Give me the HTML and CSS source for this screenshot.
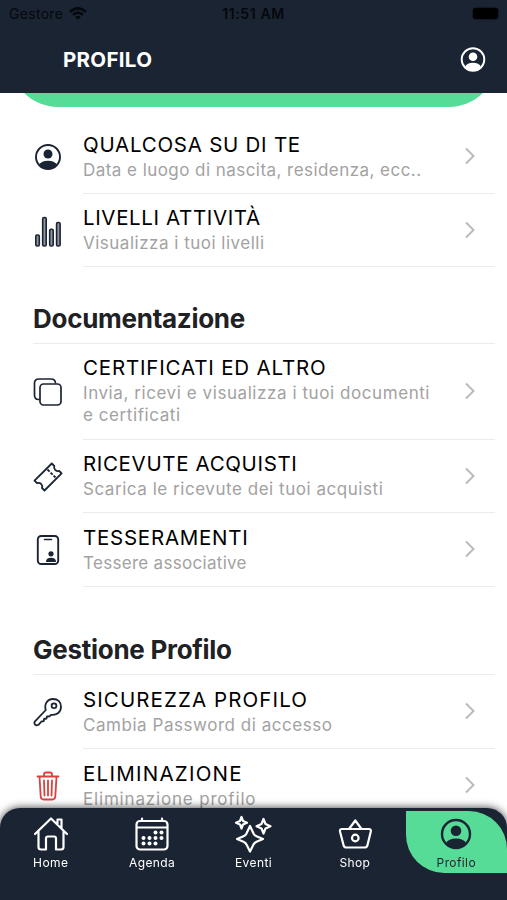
FILE: index.html
```html
<!DOCTYPE html>
<html lang="it">
<head>
    <meta charset="UTF-8">
    <meta name="viewport" content="width=device-width, initial-scale=1.0">
    <title>Profilo</title>
    <link rel="stylesheet" href="styles.css">
</head>
<body>
    <div class="header">
        <div class="statusbar">
            <div class="carrier">
                <span>Gestore</span>
                <svg width="18" height="13" viewBox="0 0 18 13">
                    <path d="M1 4.8Q9-2.2 17 4.8M4 7.8Q9 3.5 14 7.8" fill="none" stroke="#05080c" stroke-width="2.6"/>
                    <path d="M6.2 9.8Q9 7.6 11.8 9.8L9 12.8Z" fill="#05080c"/>
                </svg>
            </div>
            <div class="clock">11:51 AM</div>
            <div class="battery"><span></span></div>
        </div>
        <div class="titlebar">
            <h1>PROFILO</h1>
            <svg width="26" height="26" viewBox="0 0 26 26">
                <circle cx="13" cy="12.5" r="11.3" fill="none" stroke="#fff" stroke-width="1.9"/>
                <circle cx="13" cy="9.8" r="4.3" fill="#fff"/>
                <path d="M5 20Q7 15.8 13 15.8T21 20Q18 23.5 13 23.5T5 20Z" fill="#fff"/>
            </svg>
        </div>
    </div>

    <div class="content">
        <div class="banner"></div>

        <div class="list first">
            <div class="row">
                <div class="icon">
                    <svg width="28" height="28" viewBox="0 0 28 28">
                        <circle cx="14" cy="14" r="12" fill="none" stroke="#1b2433" stroke-width="1.9"/>
                        <circle cx="14" cy="11" r="4.5" fill="#1b2433"/>
                        <path d="M5 21.5Q7.5 17.7 14 17.7T23 21.5Q19.5 26 14 26T5 21.5Z" fill="#1b2433"/>
                    </svg>
                </div>
                <div class="text">
                    <h3 class="t-info">QUALCOSA SU DI TE</h3>
                    <p class="s-info">Data e luogo di nascita, residenza, ecc..</p>
                </div>
                <svg class="chevron" width="12" height="18" viewBox="0 0 12 18"><path d="M2 1.5L9.5 9L2 16.5"/></svg>
            </div>
            <div class="row">
                <div class="icon">
                    <svg width="28" height="32" viewBox="0 0 28 32" fill="#8e93a1" stroke="#1b2433" stroke-width="1.6">
                        <rect x="1.8" y="20" width="3.5" height="11" rx="1.3"/>
                        <rect x="8.7" y="2.5" width="3.5" height="28.5" rx="1.3"/>
                        <rect x="15.7" y="14.3" width="3.5" height="16.7" rx="1.3"/>
                        <rect x="22.6" y="7.5" width="3.5" height="23.5" rx="1.3"/>
                    </svg>
                </div>
                <div class="text">
                    <h3 class="t-levels">LIVELLI ATTIVITÀ</h3>
                    <p class="s-levels">Visualizza i tuoi livelli</p>
                </div>
                <svg class="chevron" width="12" height="18" viewBox="0 0 12 18"><path d="M2 1.5L9.5 9L2 16.5"/></svg>
            </div>
        </div>

        <h2 class="docs">Documentazione</h2>
        <div class="list">
            <div class="row">
                <div class="icon">
                    <svg width="30" height="30" viewBox="0 0 30 30" fill="none" stroke="#1b2433" stroke-width="1.7">
                        <path d="M7 22.5H5.5Q1.5 22.5 1.5 18V6Q1.5 2 6 2H18Q22.5 2 22.5 6.5"/>
                        <rect x="7" y="7" width="21" height="21" rx="3.5"/>
                    </svg>
                </div>
                <div class="text">
                    <h3 class="t-certs">CERTIFICATI ED ALTRO</h3>
                    <p class="s-certs">Invia, ricevi e visualizza i tuoi documenti<br>e certificati</p>
                </div>
                <svg class="chevron" width="12" height="18" viewBox="0 0 12 18"><path d="M2 1.5L9.5 9L2 16.5"/></svg>
            </div>
            <div class="row">
                <div class="icon">
                    <svg width="30" height="30" viewBox="0 0 30 30" fill="none" stroke="#1b2433" stroke-width="1.8" stroke-linejoin="round">
                        <path d="M18.8 1.5L21.3 4Q20.5 6.3 22.3 8Q24 9.5 26.2 9L28.6 11.4L11.5 28.5L9 26Q9.8 23.7 8.2 22Q6.3 20.3 4 21.2L1.5 18.7Z"/>
                        <path d="M14.5 7.5L22.5 15.5" stroke-dasharray="3 1.3"/>
                    </svg>
                </div>
                <div class="text">
                    <h3 class="t-receipts">RICEVUTE ACQUISTI</h3>
                    <p class="s-receipts">Scarica le ricevute dei tuoi acquisti</p>
                </div>
                <svg class="chevron" width="12" height="18" viewBox="0 0 12 18"><path d="M2 1.5L9.5 9L2 16.5"/></svg>
            </div>
            <div class="row">
                <div class="icon">
                    <svg width="24" height="32" viewBox="0 0 24 32">
                        <rect x="1.8" y="2" width="20.4" height="28" rx="3.5" fill="none" stroke="#1b2433" stroke-width="1.9"/>
                        <path d="M8.5 5.5H15.5" stroke="#1b2433" stroke-width="1.6" stroke-linecap="round"/>
                        <circle cx="15" cy="19.8" r="2.6" fill="#1b2433"/>
                        <path d="M10 28Q10 23.8 15 23.8T20 28Z" fill="#1b2433"/>
                    </svg>
                </div>
                <div class="text">
                    <h3 class="t-cards">TESSERAMENTI</h3>
                    <p class="s-cards">Tessere associative</p>
                </div>
                <svg class="chevron" width="12" height="18" viewBox="0 0 12 18"><path d="M2 1.5L9.5 9L2 16.5"/></svg>
            </div>
        </div>

        <h2 class="manage">Gestione Profilo</h2>
        <div class="list">
            <div class="row">
                <div class="icon">
                    <svg width="30" height="30" viewBox="0 0 30 30" fill="none" stroke="#1b2433" stroke-width="1.8" stroke-linejoin="round">
                        <path d="M12.8 13C11 7.5 14 2 20 2C25 2 28 5.3 28 9.8C28 15 24 18.5 18 17.8L16.5 19.3L14 19.5L13.5 21.5L11 22L10.8 24.2L8.4 24.5L5.5 27.8Q3.5 29 2 27.5Q.8 26 2 24.3Z"/>
                        <circle cx="21" cy="8.8" r="2.4"/>
                    </svg>
                </div>
                <div class="text">
                    <h3 class="t-security">SICUREZZA PROFILO</h3>
                    <p class="s-security">Cambia Password di accesso</p>
                </div>
                <svg class="chevron" width="12" height="18" viewBox="0 0 12 18"><path d="M2 1.5L9.5 9L2 16.5"/></svg>
            </div>
            <div class="row">
                <div class="icon">
                    <svg width="24" height="30" viewBox="0 0 24 30" fill="none" stroke="#d9413f" stroke-width="1.8" stroke-linecap="round" stroke-linejoin="round">
                        <path d="M1.5 5.5H22.5M3.5 5.5L4.7 25.5Q5 28.5 7.5 28.5H16.5Q19 28.5 19.3 25.5L20.5 5.5M8 5V3.5Q8 1.5 10 1.5H14Q16 1.5 16 3.5V5M8 9.5L8.5 24.5M12 9.5V24.5M16 9.5L15.5 24.5"/>
                    </svg>
                </div>
                <div class="text">
                    <h3 class="t-delete">ELIMINAZIONE</h3>
                    <p class="s-delete">Eliminazione profilo</p>
                </div>
                <svg class="chevron" width="12" height="18" viewBox="0 0 12 18"><path d="M2 1.5L9.5 9L2 16.5"/></svg>
            </div>
        </div>
    </div>

    <div class="tabbar">
        <div class="tab">
            <svg width="36" height="36" viewBox="0 0 36 36" fill="none" stroke="#fff" stroke-width="2.2" stroke-linecap="round" stroke-linejoin="round">
                <path d="M2 18L18 2.5L34 18M5.5 15V31Q5.5 33.5 8 33.5H13V22.5Q13 20.5 15 20.5H21Q23 20.5 23 22.5V33.5H28Q30.5 33.5 30.5 31V15M24.5 8V3.5H28.5V12.5"/>
            </svg>
            <span>Home</span>
        </div>
        <div class="tab">
            <svg width="36" height="36" viewBox="0 0 36 36" fill="none" stroke="#fff" stroke-width="2.2" stroke-linecap="round">
                <rect x="2.5" y="5" width="31" height="28.5" rx="3.5"/>
                <path d="M3 11.5H33M8 5V2.5M28 5V2.5"/>
                <g fill="#fff" stroke="none">
                    <circle cx="21.5" cy="16.5" r="2"/><circle cx="27.5" cy="16.5" r="2"/>
                    <circle cx="9.5" cy="22" r="2"/><circle cx="15.5" cy="22" r="2"/><circle cx="21.5" cy="22" r="2"/><circle cx="27.5" cy="22" r="2"/>
                    <circle cx="9.5" cy="27.5" r="2"/><circle cx="15.5" cy="27.5" r="2"/><circle cx="21.5" cy="27.5" r="2"/>
                </g>
            </svg>
            <span>Agenda</span>
        </div>
        <div class="tab">
            <svg class="stars" width="38" height="40" viewBox="0 0 38 40" fill="none" stroke="#fff" stroke-width="2.2" stroke-linejoin="round">
                <path d="M16 12L19.500 19.500Q20.500 21.500 22.500 22.300L29 25L22.500 27.700Q20.500 28.500 19.500 30.500L16 37.500L12.500 30.500Q11.500 28.500 9.500 27.700L3 25L9.500 22.300Q11.500 21.500 12.500 19.500Z"/>
                <path d="M7.500 3L9 7L13 8.800L9 10.500L7.500 14.500L6 10.500L2 8.800L6 7ZM29.500 5L31.500 10L36.500 12.300L31.500 14.500L29.500 19.500L27.500 14.500L22.500 12.300L27.500 10Z"/>
            </svg>
            <span>Eventi</span>
        </div>
        <div class="tab">
            <svg width="36" height="36" viewBox="0 0 36 36" fill="none" stroke="#fff" stroke-width="2.2" stroke-linejoin="round">
                <path d="M5 13H32Q34.2 13 33.8 15.5L30.5 29Q30 31.5 27.5 31.5H9.5Q7 31.5 6.500 29L3 15.5Q2.500 13 5 13ZM12 13L18.300 4.5L24.500 13"/>
                <circle cx="18.3" cy="22" r="3.3"/>
            </svg>
            <span>Shop</span>
        </div>
        <div class="tab active">
            <svg width="36" height="36" viewBox="0 0 36 36">
                <circle cx="18" cy="18" r="14" fill="none" stroke="#1b2433" stroke-width="2.4"/>
                <circle cx="18" cy="14.8" r="5.3" fill="#1b2433"/>
                <path d="M8 27Q10.5 22.5 18 22.5T28 27Q24 32 18 32T8 27Z" fill="#1b2433"/>
            </svg>
            <span>Profilo</span>
        </div>
    </div>
</body>
</html>
```

FILE: styles.css
```css
* {
    box-sizing: border-box;
}
body {
    font-family: 'Inter', sans-serif;
    margin: 0;
    height: 900px;
    overflow: hidden;
    background-color: #fff;
    display: flex;
    flex-direction: column;
}
h1, h2, h3, p {
    margin: 0;
    white-space: nowrap;
}

/* header */
.header {
    background-color: #1b2433;
    height: 93px;
    flex-shrink: 0;
}
.statusbar {
    display: grid;
    grid-template-columns: 1fr auto 1fr;
    align-items: center;
    height: 27px;
    padding: 0 9px;
    color: #05080c;
    font-size: 14px;
}
.carrier {
    display: flex;
    align-items: center;
    gap: 6px;
    letter-spacing: 0.3px;
}
.clock {
    font-weight: 600;
    letter-spacing: 0.6px;
}
.battery {
    display: flex;
    justify-content: flex-end;
}
.battery span {
    width: 25px;
    height: 11px;
    border-radius: 3px;
    background-color: #000;
    box-shadow: 0 0 2px #000;
}
.titlebar {
    display: flex;
    justify-content: space-between;
    align-items: center;
    height: 65px;
    padding: 0 21px 0 63px;
    color: #fff;
}
h1 {
    font-size: 20.5px;
    font-weight: 700;
    letter-spacing: 0.3px;
}

/* page */
.content {
    flex: 1;
    min-height: 0;
    overflow: hidden;
}
.banner {
    height: 100px;
    margin: -86px 10px 0;
    background-color: #56dc97;
    border-radius: 48px;
}
h2 {
    margin: 0 12px 0 33px;
    padding-bottom: 7px;
    border-bottom: 1px solid #ebebeb;
    color: #202124;
    font-size: 26px;
    line-height: 34px;
    font-weight: 700;
    letter-spacing: -0.28px;
}
.list.first {
    padding-top: 13px;
}
.row {
    display: flex;
    align-items: center;
    position: relative;
    padding-left: 27px;
}
.icon {
    width: 42px;
    margin-right: 14px;
    display: flex;
    justify-content: center;
}
.text {
    flex: 1;
    margin-right: 12px;
    padding: 12.5px 0 12.2px;
    border-bottom: 1px solid #ebebeb;
}
h3 {
    color: #000;
    font-size: 20.5px;
    line-height: 24px;
    font-weight: 400;
    margin-bottom: 2px;
}
p {
    color: #a2a2a2;
    font-size: 17px;
    line-height: 22px;
}
.chevron {
    position: absolute;
    right: 31px;
    top: calc(50% - 10px);
    fill: none;
    stroke: #bababa;
    stroke-width: 2;
}
.docs {
    margin-top: 34.6px;
}
.manage {
    margin-top: 46.4px;
}

/* tracking of the single labels */
.t-info { letter-spacing: 0.75px; }
.t-levels { letter-spacing: 0.63px; }
.t-certs { letter-spacing: 0.82px; }
.t-receipts { letter-spacing: 0.65px; }
.t-cards { letter-spacing: 0.75px; }
.t-security { letter-spacing: 1.1px; }
.t-delete { letter-spacing: 1.25px; }
.s-info { letter-spacing: 0.45px; }
.s-levels { letter-spacing: 0.5px; }
.s-certs { letter-spacing: 0.57px; }
.s-receipts { letter-spacing: 0.54px; }
.s-cards { letter-spacing: 0.3px; }
.s-security { letter-spacing: 0.54px; }
.s-delete { letter-spacing: 0.82px; }

/* bottom navigation */
.tabbar {
    display: grid;
    grid-template-columns: repeat(5, 1fr);
    position: fixed;
    left: 0;
    right: 0;
    bottom: 0;
    height: 92px;
    padding-top: 3px;
    background-color: #1b2433;
    border-radius: 20px 20px 0 0;
    box-shadow: 0 0 9px rgba(0, 0, 0, 0.8);
}
.tab {
    display: flex;
    flex-direction: column;
    align-items: center;
    height: 62px;
    padding-top: 5px;
    color: #fff;
    font-size: 12px;
    line-height: 16px;
    letter-spacing: 0.4px;
}
.tab span {
    margin-top: 3px;
}
.stars {
    margin: -2px 0;
}
.tab.active {
    background-color: #56dc97;
    color: #1b2433;
    border-radius: 0 38px 0 38px;
}
```
